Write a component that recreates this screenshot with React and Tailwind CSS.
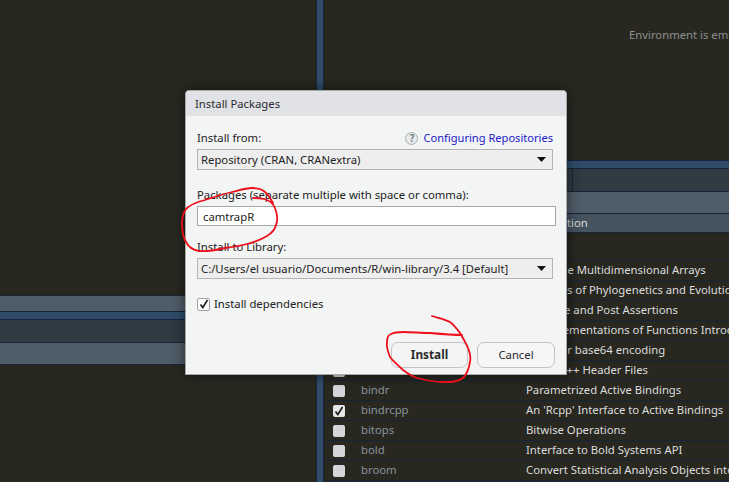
import React from 'react';

const PACKAGES = [
  { name: 'abind', desc: 'Combine Multidimensional Arrays' },
  { name: 'ape', desc: 'Analyses of Phylogenetics and Evolution' },
  { name: 'assertthat', desc: 'Easy Pre and Post Assertions' },
  { name: 'backports', desc: 'Reimplementations of Functions Introduced' },
  { name: 'base64enc', desc: 'Tools for base64 encoding' },
  { name: 'BH', desc: 'Boost C++ Header Files' },
  { name: 'bindr', desc: 'Parametrized Active Bindings' },
  { name: 'bindrcpp', desc: "An 'Rcpp' Interface to Active Bindings", checked: true },
  { name: 'bitops', desc: 'Bitwise Operations' },
  { name: 'bold', desc: 'Interface to Bold Systems API' },
  { name: 'broom', desc: 'Convert Statistical Analysis Objects into Tidy Data Frames' },
];

function Check() {
  return (
    <svg width="10" height="10" viewBox="0 0 10 10" fill="none" stroke="#1a1a1a" strokeWidth="1.6">
      <path d="M1.5 5.5 L3.8 8.5 L8.5 1" />
    </svg>
  );
}

function PackageRow({ pkg }) {
  return (
    <div className="flex items-center h-5 shrink-0 border-b border-[#16233a] ml-[2px] whitespace-nowrap overflow-hidden">
      <div className={`ml-[7px] w-3 h-3 shrink-0 rounded-[2px] flex items-center justify-center ${pkg.checked ? 'bg-[#e4e6e8]' : 'bg-[#d3d5d8]'}`}>
        {pkg.checked && <Check />}
      </div>
      <div className="ml-4 w-[165px] shrink-0 text-[#87929c]">{pkg.name}</div>
      <div className="shrink-0 text-[#dcdcdc]">{pkg.desc}</div>
    </div>
  );
}

function SelectBox({ children }) {
  return (
    <div className="h-[21px] w-[356px] border border-[#b4b4b4] bg-[#eeeeee] flex items-center justify-between pl-[3px] pr-[6px] whitespace-nowrap">
      <span className="pt-[1px]">{children}</span>
      <svg width="9" height="5" viewBox="0 0 9 5"><path d="M0 0 H9 L4.5 5 Z" fill="#111" /></svg>
    </div>
  );
}

function InstallDialog() {
  return (
    <div className="absolute left-[185px] top-[90px] w-[382px] h-[285px] flex flex-col bg-[#f3f4f4] border border-[#a8a8a8] rounded-t-[4px] shadow-[0_0_14px_rgba(0,0,0,0.55)] text-[#222] text-[11.3px]">
      <div className="h-[25px] shrink-0 bg-[#e1e2e5] rounded-t-[4px] flex items-center pl-[9px] pt-[1px] text-[#2b2b33]">Install Packages</div>
      <div className="flex-1 flex flex-col pl-[11px] pr-[13px] relative">
        <div className="flex items-center justify-between h-[16px] mt-[14px]">
          <span>Install from:</span>
          <span className="flex items-center gap-[5px]">
            <span className="w-[13px] h-[13px] rounded-full border border-[#a9b2b5] bg-[#e6eaea] text-[#68767c] text-[10px] flex items-center justify-center font-semibold">?</span>
            <span className="text-[#2020c8] text-[11.1px]">Configuring Repositories</span>
          </span>
        </div>
        <div className="mt-[3px]"><SelectBox>Repository (CRAN, CRANextra)</SelectBox></div>
        <div className="h-[16px] mt-[17px] flex items-center">Packages (separate multiple with space or comma):</div>
        <input readOnly value="camtrapR" className="mt-[3px] h-[20px] w-[359px] shrink-0 border border-[#a5a5a5] bg-white pl-[5px] outline-none" />
        <div className="h-[16px] mt-[13px] flex items-center">Install to Library:</div>
        <div className="mt-[3px]"><SelectBox>C:/Users/el usuario/Documents/R/win-library/3.4 [Default]</SelectBox></div>
        <div className="flex items-center gap-[4px] mt-[18px] h-[14px]">
          <span className="w-[13px] h-[13px] border border-[#a0a0a0] rounded-[2px] bg-white flex items-center justify-center"><Check /></span>
          <span>Install dependencies</span>
        </div>
        <div className="flex justify-end gap-[9px] mt-[31px] -mr-[2px]">
          <button className="w-[77px] h-[26px] rounded-[7px] border border-[#c4c4c4] bg-[#f4f4f4] font-bold text-[11.8px] text-[#2b2b2b]">Install</button>
          <button className="w-[78px] h-[26px] rounded-[7px] border border-[#c4c4c4] bg-[#f6f6f6] text-[#2b2b2b]">Cancel</button>
        </div>
      </div>
    </div>
  );
}

// hand drawn red circles over the dialog
function RedMarks() {
  return (
    <svg className="absolute left-0 top-0 pointer-events-none" width="729" height="482" fill="none" stroke="#ee0f1a" strokeWidth="1.8" strokeLinecap="round" strokeLinejoin="round">
      <path d="M273 203 C270 198 268 194 265 192 C262 189 258 188 252 188 C246 188 240 190 232 192 C224 194 214 197 205 200 C197 202 190 205 186 209 C183 213 182 218 182 224 C182 231 183 237 186 242 C189 248 193 250 199 251 C207 252 216 250 225 248 C233 247 240 246 247 244 C255 242 262 239 267 236 C272 233 275 229 276 225 C278 220 277 213 275 208 C273 203 268 200 264 199 C260 198 256 198 253 198" />
      <path d="M432 316 C438 318 445 319 450 322 C454 325 457 329 460 333 C463 338 466 343 468 348 C470 353 471 358 470 362 C469 368 467 374 463 378 C458 382 451 382 443 382 C434 382 425 380 417 378 C411 376 407 373 403 370 C398 365 393 361 390 357 C388 352 386 347 387 342 C387 338 388 335 391 334 C395 332 399 332 403 332 C412 332 421 333 430 333 C441 334 452 335 462 335" />
    </svg>
  );
}

export default function App() {
  return (
    <div className="relative w-[729px] h-[482px] overflow-hidden flex bg-[#282821] text-[11.3px] font-['Noto_Sans',sans-serif]">
      {/* left pane */}
      <div className="w-[316px] flex flex-col">
        <div className="h-[295px] shrink-0" />
        <div className="h-[17px] shrink-0 bg-[#4f5d68] border-y border-[#16233a]" />
        <div className="h-[8px] shrink-0 bg-[#2f4d69] border-b border-[#16233a]" />
        <div className="h-[23px] shrink-0 bg-[#2f3a43] border-b border-[#16233a]" />
        <div className="h-[22px] shrink-0 bg-[#4f5d68] border-b border-[#16233a]" />
      </div>

      {/* splitter */}
      <div className="w-[8px] bg-[#2f4d69] border-x border-[#16233a]" />

      {/* right pane */}
      <div className="flex-1 flex flex-col min-w-0">
        <div className="h-[160px] shrink-0 pl-[305px] pt-[27px] text-[#8b8f8f] whitespace-nowrap">Environment is empty</div>
        <div className="h-[9px] shrink-0 bg-[#2f4d69] border-y border-[#16233a]" />
        <div className="h-[23px] shrink-0 bg-[#2f3a43] border-b border-[#16233a] flex">
          <div className="w-[249px] border-r border-[#16233a]" />
        </div>
        <div className="h-[22px] shrink-0 bg-[#4f5d68] border-b border-[#16233a]" />
        <div className="h-[19px] shrink-0 bg-[#45535f] border-b border-[#16233a] flex items-center text-[#dcdcdc] whitespace-nowrap">
          <span className="ml-[38px] w-[165px] shrink-0">Name</span>
          <span>Description</span>
        </div>
        <div className="h-[28px] shrink-0 border-b border-[#16233a] flex items-end pl-2 pb-1 text-[#dcdcdc]">User Library</div>
        {PACKAGES.map((pkg) => (
          <PackageRow key={pkg.name} pkg={pkg} />
        ))}
      </div>

      <InstallDialog />
      <RedMarks />
    </div>
  );
}
